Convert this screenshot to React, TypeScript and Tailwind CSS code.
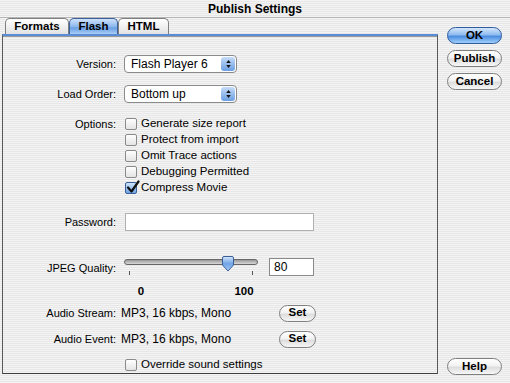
import React from "react";

const stripes =
  "bg-[repeating-linear-gradient(to_bottom,#f4f4f4_0px,#f4f4f4_1px,#e7e7e7_1px,#e7e7e7_2px)]";

const PillButton = ({
  label,
  primary,
  className = "",
}: {
  label: string;
  primary?: boolean;
  className?: string;
}) => (
  <div
    className={`flex items-center justify-center rounded-full border font-bold text-[11.5px] leading-none text-black ${
      primary
        ? "border-[#2f5b9c] bg-[linear-gradient(to_bottom,#d4e6fb_0%,#8fbcf0_45%,#4c8ce0_55%,#9fd0fb_100%)]"
        : "border-[#7f7f7f] bg-[linear-gradient(to_bottom,#ffffff_0%,#f2f2f2_45%,#dddddd_55%,#f7f7f7_100%)]"
    } ${className}`}
  >
    {label}
  </div>
);

const Checkbox = ({ checked }: { checked?: boolean }) => (
  <div
    className={`relative h-[12px] w-[12px] shrink-0 rounded-[2px] border ${
      checked
        ? "border-[#3a5f9a] bg-[linear-gradient(to_bottom,#cfe3fa,#6ea4e6)]"
        : "border-[#8a8a8a] bg-[linear-gradient(to_bottom,#ffffff,#e4e4e4)]"
    }`}
  >
    {checked && (
      <svg
        viewBox="0 0 14 14"
        className="absolute left-[0px] top-[-3px] h-[14px] w-[14px]"
      >
        <path
          d="M2 7.5 L5.5 11.5 L12.5 1.5"
          fill="none"
          stroke="#111"
          strokeWidth="2.2"
          strokeLinecap="round"
          strokeLinejoin="round"
        />
      </svg>
    )}
  </div>
);

const PopUp = ({ value }: { value: string }) => (
  <div className="flex h-[18px] w-[113px] items-center rounded-[4px] border border-[#8a8a8a] bg-white pl-[6px]">
    <span className="flex-1 text-[12px] leading-none">{value}</span>
    <div className="mr-[1px] flex h-[14px] w-[14px] flex-col items-center justify-center gap-[2px] rounded-[3px] bg-[linear-gradient(to_bottom,#c6dcf8,#6b9fe2)]">
      <svg viewBox="0 0 6 4" className="h-[3px] w-[5px]">
        <path d="M0 4 L3 0 L6 4 Z" fill="#111" />
      </svg>
      <svg viewBox="0 0 6 4" className="h-[3px] w-[5px]">
        <path d="M0 0 L3 4 L6 0 Z" fill="#111" />
      </svg>
    </div>
  </div>
);

const Label = ({ children }: { children: React.ReactNode }) => (
  <div className="w-[114px] shrink-0 pr-[1px] text-right text-[11px] leading-none">
    {children}
  </div>
);

const CheckRow = ({ label, checked }: { label: string; checked?: boolean }) => (
  <div className="flex h-[16px] items-center gap-[4px]">
    <Checkbox checked={checked} />
    <span className="text-[11.5px] leading-none">{label}</span>
  </div>
);

export default function App() {
  return (
    <div
      className={`flex h-[383px] w-[510px] flex-col overflow-hidden text-black ${stripes}`}
      style={{ fontFamily: '"Liberation Sans", Arial, sans-serif' }}
    >
      {/* Title bar */}
      <div className="flex h-[18px] shrink-0 items-center justify-center border-b border-[#b5b5b5] text-[12px] font-bold">
        Publish Settings
      </div>

      <div className="flex flex-1">
        {/* Left: tabs + panel */}
        <div className="ml-[2px] flex w-[436px] flex-col">
          <div className="ml-[3px] flex h-[16px] items-end">
            <div className="flex h-[16px] w-[64px] items-center justify-center rounded-t-[5px] border border-b-0 border-[#7f7f7f] bg-[linear-gradient(to_bottom,#ffffff,#e2e2e2)] text-[11.5px] font-bold">
              Formats
            </div>
            <div className="flex h-[16px] w-[49px] items-center justify-center rounded-t-[5px] border border-b-0 border-[#3a5f9a] bg-[linear-gradient(to_bottom,#cfe2fa_0%,#8cb8ee_50%,#6a9fe4_60%,#a9cdf6_100%)] text-[11.5px] font-bold">
              Flash
            </div>
            <div className="flex h-[16px] w-[51px] items-center justify-center rounded-t-[5px] border border-b-0 border-[#7f7f7f] bg-[linear-gradient(to_bottom,#ffffff,#e2e2e2)] text-[11.5px] font-bold">
              HTML
            </div>
          </div>

          {/* Panel */}
          <div className="flex h-[340px] flex-col border-x border-b border-t-2 border-x-[#5a5a5a] border-b-[#3f3f3f] border-t-[#5b8dd6]">
            <div className="h-[1px] bg-[#9a9a9a]" />

            <div className="mt-[18px] flex items-center gap-[7px]">
              <Label>Version:</Label>
              <PopUp value="Flash Player 6" />
            </div>

            <div className="mt-[12px] flex items-center gap-[7px]">
              <Label>Load Order:</Label>
              <PopUp value="Bottom up" />
            </div>

            <div className="mt-[13px] flex gap-[8px]">
              <div className="flex h-[16px] items-center">
                <Label>Options:</Label>
              </div>
              <div className="flex flex-col">
                <CheckRow label="Generate size report" />
                <CheckRow label="Protect from import" />
                <CheckRow label="Omit Trace actions" />
                <CheckRow label="Debugging Permitted" />
                <CheckRow label="Compress Movie" checked />
              </div>
            </div>

            <div className="mt-[17px] flex items-center gap-[8px]">
              <Label>Password:</Label>
              <div className="h-[18px] w-[189px] border border-[#b0b0b0] bg-white" />
            </div>

            {/* JPEG Quality */}
            <div className="mt-[24px] flex items-start gap-[7px]">
              <div className="mt-[8px] flex">
                <Label>JPEG Quality:</Label>
              </div>
              <div className="flex w-[134px] flex-col">
                <div className="relative h-[16px]">
                  <div className="absolute left-0 right-0 top-[4px] h-[6px] rounded-full border border-[#666] bg-[linear-gradient(to_bottom,#9a9a9a,#d8d8d8)]" />
                  <svg
                    viewBox="0 0 14 16"
                    className="absolute left-[97px] top-[1px] h-[16px] w-[14px]"
                  >
                    <defs>
                      <linearGradient id="thumb" x1="0" y1="0" x2="0" y2="1">
                        <stop offset="0" stopColor="#d8e8fb" />
                        <stop offset="0.5" stopColor="#6fa3e6" />
                        <stop offset="1" stopColor="#a8cdf5" />
                      </linearGradient>
                    </defs>
                    <path
                      d="M1.5 2 Q1.5 0.5 3 0.5 L11 0.5 Q12.5 0.5 12.5 2 L12.5 9 L7 15 L1.5 9 Z"
                      fill="url(#thumb)"
                      stroke="#3b5f95"
                      strokeWidth="1"
                    />
                  </svg>
                </div>
                <div className="flex justify-between px-[5px]">
                  <div className="h-[4px] w-[1px] bg-[#555]" />
                  <div className="h-[4px] w-[1px] bg-[#555]" />
                </div>
              </div>
              <div className="ml-[4px] mt-[3px] flex h-[18px] w-[45px] items-center border border-[#8a8a8a] bg-white pl-[4px] text-[12px]">
                80
              </div>
            </div>
            <div className="mt-[10px] flex text-[11.5px] font-bold leading-none">
              <div className="ml-[133px] w-[10px] text-center">0</div>
              <div className="ml-[86px] w-[24px] text-center">100</div>
            </div>

            <div className="mt-[7px] flex h-[17px] items-center">
              <Label>Audio Stream:</Label>
              <span className="ml-[4px] w-[158px] text-[12px]">
                MP3, 16 kbps, Mono
              </span>
              <PillButton label="Set" className="h-[17px] w-[37px]" />
            </div>

            <div className="mt-[9px] flex h-[17px] items-center">
              <Label>Audio Event:</Label>
              <span className="ml-[4px] w-[158px] text-[12px]">
                MP3, 16 kbps, Mono
              </span>
              <PillButton label="Set" className="h-[17px] w-[37px]" />
            </div>

            <div className="ml-[122px] mt-[9px]">
              <CheckRow label="Override sound settings" />
            </div>
          </div>
        </div>

        {/* Right: buttons */}
        <div className="ml-[9px] flex w-[55px] flex-col pb-[8px] pt-[9px]">
          <PillButton label="OK" primary className="h-[17px]" />
          <PillButton label="Publish" className="mt-[6px] h-[17px]" />
          <PillButton label="Cancel" className="mt-[6px] h-[17px]" />
          <div className="flex-1" />
          <PillButton label="Help" className="h-[17px]" />
        </div>
      </div>
    </div>
  );
}
